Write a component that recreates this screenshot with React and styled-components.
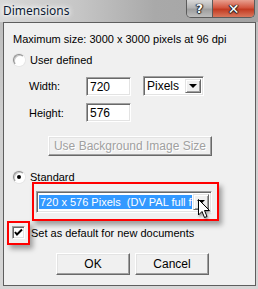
import React from 'react'
import styled, { createGlobalStyle } from 'styled-components'

const GlobalStyle = createGlobalStyle`
  html, body { margin: 0; padding: 0; background: #fff; }
  body { font-family: "Liberation Sans", Arial, sans-serif; font-size: 11px; color: #000; }
`

const Window = styled.div`
  width: 258px;
  height: 289px;
  box-sizing: border-box;
  background: linear-gradient(to bottom, #b9b9b9, #cfcfcf 40%, #d6d6d6);
  padding: 0 2px 3px 3px;
  display: flex;
  flex-direction: column;
`

const TitleBar = styled.div`
  height: 22px;
  display: flex;
  align-items: flex-start;
  justify-content: space-between;
  margin-left: -3px;
  margin-right: -2px;
  padding-left: 3px;
  padding-right: 3px;
  background: linear-gradient(to right, #d9d9d9 0%, #c6c6c6 30%, #a9a9a9 60%, #a3a3a3 100%);
`

const Title = styled.div`
  font-family: "Noto Sans", "Open Sans", sans-serif;
  font-size: 12px;
  line-height: 15px;
  margin-top: 3px;
  color: #0c1a33;
  text-shadow: 0 0 6px #fff, 0 0 6px #fff, 0 0 3px #fff;
`

const Caps = styled.div`
  display: flex;
  height: 17px;
  border: 1px solid #5b5b5b;
  border-top: none;
  border-radius: 0 0 5px 5px;
  overflow: hidden;
`

const CapButton = styled.div`
  display: flex;
  align-items: center;
  justify-content: center;
  width: ${p => p.$w}px;
  background: ${p => p.$red
    ? 'linear-gradient(to bottom, #e8a090, #d3563f 45%, #c23b22 55%, #d9775c)'
    : 'linear-gradient(to bottom, #d8d8d8, #b3b3b3 45%, #9e9e9e 55%, #bdbdbd)'};
  border-left: ${p => p.$red ? '1px solid #5b5b5b' : 'none'};
  color: #fff;
  font-family: "DejaVu Sans", sans-serif;
  font-weight: bold;
  font-size: ${p => p.$red ? 14 : 12}px;
  text-shadow: 0 0 1px #222, 1px 0 1px #222, -1px 0 1px #222, 0 1px 1px #222;
`

const Client = styled.div`
  flex: 1;
  background: #f0f0f0;
  border: 1px solid #5e5e5e;
  box-sizing: border-box;
  padding: 10px 0 0 9px;
  display: flex;
  flex-direction: column;
  position: relative;
`

const Line = styled.div`
  height: 13px;
  line-height: 13px;
  white-space: nowrap;
`

const Row = styled.div`
  display: flex;
  align-items: center;
  margin-top: ${p => p.$mt || 0}px;
  margin-left: ${p => p.$ml || 0}px;
  gap: ${p => p.$gap || 0}px;
`

const Radio = styled.span`
  width: 12px;
  height: 12px;
  box-sizing: border-box;
  border-radius: 50%;
  background: #fff;
  border: 1px solid;
  border-color: #8d8d8d #ffffff #ffffff #8d8d8d;
  box-shadow: inset 1px 1px 0 #c8c8c8, 0 0 0 1px #e6e6e6;
  display: flex;
  align-items: center;
  justify-content: center;
  &::after {
    content: '';
    display: ${p => p.$checked ? 'block' : 'none'};
    width: 4px;
    height: 4px;
    border-radius: 50%;
    background: #000;
  }
`

const Label = styled.span`
  width: ${p => p.$w ? `${p.$w}px` : 'auto'};
  white-space: nowrap;
  color: ${p => p.$disabled ? '#a0a0a0' : '#000'};
`

const Field = styled.div`
  width: 45px;
  height: 19px;
  box-sizing: border-box;
  background: #fff;
  border: 1px solid;
  border-color: #a0a0a0 #fff #fff #a0a0a0;
  box-shadow: inset 1px 1px 0 #696969, inset -1px -1px 0 #e3e3e3;
  padding: 3px 0 0 3px;
  font-size: 12px;
  line-height: 13px;
`

const Combo = styled.div`
  width: ${p => p.$w}px;
  height: ${p => p.$h}px;
  box-sizing: border-box;
  background: #fff;
  border: 1px solid;
  border-color: #a0a0a0 #fff #fff #a0a0a0;
  box-shadow: inset 1px 1px 0 #696969, inset -1px -1px 0 #e3e3e3;
  padding: 2px;
  display: flex;
  align-items: stretch;
`

const ComboText = styled.div`
  flex: 1;
  min-width: 0;
  overflow: hidden;
  white-space: pre;
  font-size: ${p => p.$fs || 12}px;
  line-height: ${p => p.$lh}px;
  padding-left: 1px;
  margin: ${p => p.$selected ? '1px 1px 1px 0' : '0'};
  background: ${p => p.$selected ? '#3399ff' : 'transparent'};
  color: ${p => p.$selected ? '#fff' : '#000'};
`

const DropButton = styled.div`
  width: 16px;
  box-sizing: border-box;
  background: #f0f0f0;
  border: 1px solid;
  border-color: #e3e3e3 #696969 #696969 #e3e3e3;
  box-shadow: inset 1px 1px 0 #fff, inset -1px -1px 0 #a0a0a0;
  display: flex;
  align-items: center;
  justify-content: center;
  &::after {
    content: '';
    border-left: 4px solid transparent;
    border-right: 4px solid transparent;
    border-top: 4px solid #000;
  }
`

const Button = styled.div`
  width: ${p => p.$w}px;
  height: ${p => p.$h}px;
  box-sizing: border-box;
  background: #f0f0f0;
  border: 1px solid;
  border-color: #fff #696969 #696969 #fff;
  box-shadow: inset -1px -1px 0 #a0a0a0, inset 1px 1px 0 #e3e3e3;
  display: flex;
  align-items: center;
  justify-content: center;
  color: ${p => p.$disabled ? '#a0a0a0' : '#000'};
  font-size: 12px;
  white-space: nowrap;
  text-shadow: ${p => p.$disabled ? '1px 1px 0 #fff' : 'none'};
`

const Highlight = styled.div`
  display: inline-flex;
  align-self: flex-start;
  border: 2px solid #ff0000;
  padding: ${p => p.$pad};
  margin: ${p => p.$m};
  box-shadow: 3px 4px 5px rgba(0, 0, 0, 0.35);
`

const Check = styled.span`
  width: 13px;
  height: 13px;
  box-sizing: border-box;
  background: #fff;
  border: 1px solid;
  border-color: #a0a0a0 #fff #fff #a0a0a0;
  box-shadow: inset 1px 1px 0 #696969, inset -1px -1px 0 #e3e3e3;
  display: flex;
  align-items: center;
  justify-content: center;
`

const Buttons = styled.div`
  display: flex;
  gap: 5px;
  margin-top: 8px;
  margin-left: 43px;
`

const Cursor = styled.svg`
  position: absolute;
  left: 194px;
  top: 176px;
  filter: drop-shadow(1px 2px 1px rgba(0, 0, 0, 0.35));
`

export default function App() {
  return (
    <>
      <GlobalStyle />
      <Window>
        <TitleBar>
          <Title>Dimensions</Title>
          <Caps>
            <CapButton $w={25}>?</CapButton>
            <CapButton $w={41} $red>✕</CapButton>
          </Caps>
        </TitleBar>
        <Client>
          <Line>Maximum size: 3000 x 3000 pixels at 96 dpi</Line>
          <Row $mt={8} $gap={5}>
            <Radio />
            <Label>User defined</Label>
          </Row>
          <Row $mt={10} $ml={16}>
            <Label $w={57}>Width:</Label>
            <Field>720</Field>
            <Combo $w={61} $h={20} style={{ marginLeft: 12 }}>
              <ComboText $lh={15}>Pixels</ComboText>
              <DropButton />
            </Combo>
          </Row>
          <Row $mt={7} $ml={16}>
            <Label $w={57}>Height:</Label>
            <Field>576</Field>
          </Row>
          <Row $mt={14} $ml={35}>
            <Button $w={164} $h={20} $disabled>Use Background Image Size</Button>
          </Row>
          <Row $mt={15} $gap={5}>
            <Radio $checked />
            <Label>Standard</Label>
          </Row>
          <Highlight $pad="7px 5px 6px 2px" $m="-1px 0 0 19px">
            <Combo $w={176} $h={22}>
              <ComboText $fs={11} $lh={15} $selected>720 x 576 Pixels  (DV PAL full frame)</ComboText>
              <DropButton />
            </Combo>
          </Highlight>
          <Row $mt={0} $ml={-6} $gap={1}>
            <Highlight $pad="3px 3px 4px 3px" $m="0">
              <Check>
                <svg width="9" height="9" viewBox="0 0 9 9">
                  <path d="M1 4 L3 6.5 L8 1.5" stroke="#000" strokeWidth="2" fill="none" />
                </svg>
              </Check>
            </Highlight>
            <Label>Set as default for new documents</Label>
          </Row>
          <Buttons>
            <Button $w={74} $h={22}>OK</Button>
            <Button $w={74} $h={22}>Cancel</Button>
          </Buttons>
          <Cursor width="13" height="20" viewBox="0 0 13 20">
            <path d="M0.5 0.5 L0.5 16 L4 12.5 L6.5 18.5 L9 17.5 L6.5 11.5 L11.5 11.5 Z" fill="#fff" stroke="#000" strokeWidth="1" />
          </Cursor>
        </Client>
      </Window>
    </>
  )
}
